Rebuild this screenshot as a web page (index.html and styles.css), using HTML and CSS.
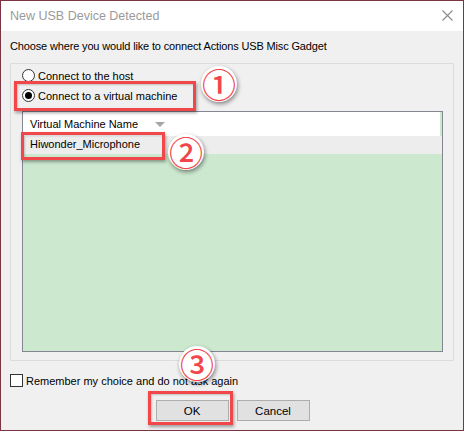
FILE: index.html
```html
<!DOCTYPE html>
<html>
<head>
<meta charset="utf-8">
<link rel="stylesheet" href="styles.css">
</head>
<body>
<div class="window">
  <div class="titlebar">
    <span class="title">New USB Device Detected</span>
    <svg class="close" width="11" height="11" viewBox="0 0 11 11"><path d="M0.5 0.5 L10.5 10.5 M10.5 0.5 L0.5 10.5" stroke="#8a8a8a" stroke-width="1.1" fill="none"/></svg>
  </div>
  <div class="content">
    <p class="prompt">Choose where you would like to connect Actions USB Misc Gadget</p>
    <div class="group">
      <label class="radio"><span class="dot"></span>Connect to the host</label>
      <label class="radio"><span class="dot on"></span>Connect to a virtual machine</label>
      <div class="list">
        <div class="list-head"><span>Virtual Machine Name</span><span class="arrow"></span></div>
        <div class="list-row">Hiwonder_Microphone</div>
        <div class="list-body"></div>
      </div>
    </div>
    <label class="check"><span class="box"></span>Remember my choice and do not ask again</label>
    <div class="buttons">
      <button class="btn">OK</button>
      <button class="btn">Cancel</button>
    </div>
  </div>

  <div class="mark m1"></div>
  <div class="mark m2"></div>
  <div class="mark m3"></div>
  <div class="badge b1"><span>①</span></div>
  <div class="badge b2"><span>②</span></div>
  <div class="badge b3"><span>③</span></div>
</div>
</body>
</html>
```
FILE: styles.css
```css
* { box-sizing: border-box; }
html, body { margin: 0; padding: 0; background: #f0f0f0; }
body { font-family: "Liberation Sans", Arial, sans-serif; font-size: 11px; color: #000; }

.window {
  position: relative;
  width: 464px;
  height: 431px;
  border: 1px solid #7a3444;
  background: #f0f0f0;
  overflow: hidden;
}

.titlebar {
  height: 30px;
  background: #fff;
  display: flex;
  align-items: center;
  justify-content: space-between;
  padding: 0 10px 0 9px;
}
.title { color: #9a9a9a; font-size: 12.5px; }
.close { margin-top: -1px; }

.content { padding: 0 9px; }
.prompt { margin: 0; padding-top: 8px; height: 32px; line-height: 15px; letter-spacing: -0.15px; }

.group {
  border: 1px solid #dcdcdc;
  height: 298px;
  padding: 2px 10px 10px 11px;
}
.radio { display: flex; align-items: center; height: 21px; }
.radio:first-child { height: 19px; }
.dot {
  width: 13px; height: 13px; border-radius: 50%;
  border: 1px solid #333; background: #fff; margin-right: 3px;
  display: flex; align-items: center; justify-content: center;
}
.dot.on::after { content: ""; width: 7px; height: 7px; border-radius: 50%; background: #000; }

.list {
  margin-top: 5px;
  border: 1px solid #828790;
  height: 241px;
  display: flex; flex-direction: column;
  background: #cce8cf;
}
.list-head {
  height: 24px; background: #fff; margin-right: 2px;
  display: flex; align-items: center; padding-left: 7px;
}
.arrow {
  margin-left: 17px; width: 0; height: 0;
  border-left: 5px solid transparent; border-right: 5px solid transparent;
  border-top: 5px solid #a6a6a6;
}
.list-row { height: 18px; background: #ededed; line-height: 17px; padding-left: 7px; }
.list-body { flex: 1; }

.check { display: flex; align-items: center; margin-top: 12px; height: 15px; }
.box { width: 13px; height: 13px; border: 1px solid #333; background: #fff; margin-right: 3px; }

.buttons { display: flex; justify-content: center; gap: 8px; margin-top: 12px; padding-left: 1px; }
.btn {
  width: 73px; height: 21px; font: inherit; font-size: 11.5px;
  background: #e1e1e1; border: 1px solid #adadad; padding: 0; color: #000;
}

.mark {
  position: absolute;
  border: 3px solid #f2474a;
  box-shadow: 1px 2px 3px rgba(0,0,0,0.35), inset 1px 1px 2px rgba(0,0,0,0.2);
}
.m1 { left: 13px; top: 80px; width: 182px; height: 30px; }
.m2 { left: 20px; top: 131px; width: 144px; height: 28px; }
.m3 { left: 147px; top: 390px; width: 85px; height: 34px; }

.badge {
  position: absolute;
  width: 36px; height: 36px; border-radius: 50%;
  background: #fff;
  box-shadow: 1px 2px 4px rgba(0,0,0,0.45);
  display: flex; align-items: center; justify-content: center;
}
.badge span {
  font-family: "Noto Sans CJK SC", "Noto Sans CJK JP", sans-serif;
  font-size: 34px; font-weight: 500; line-height: 1;
  color: #f2474a;
}
.b1 { left: 200px; top: 65px; }
.b2 { left: 167px; top: 133px; }
.b3 { left: 178px; top: 345px; }
```
